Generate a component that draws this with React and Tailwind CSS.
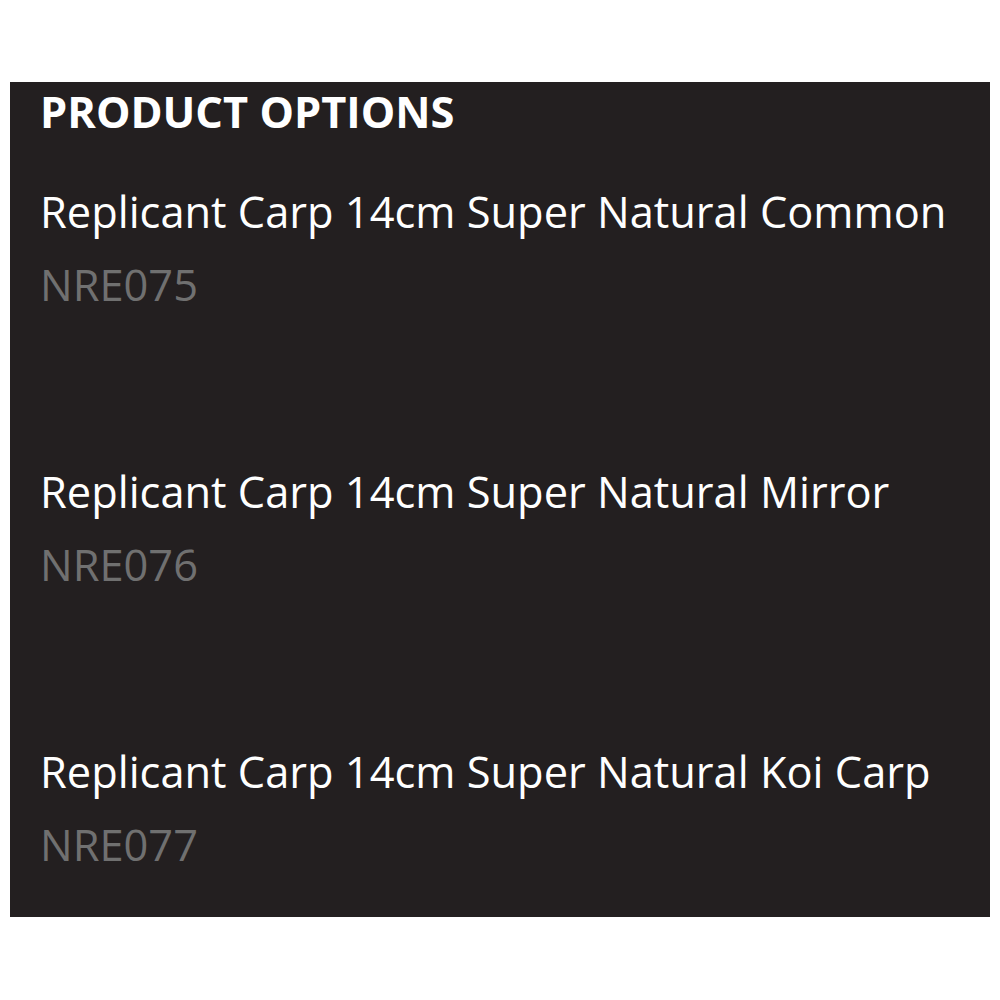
const options = [
  { name: 'Replicant Carp 14cm Super Natural Common', code: 'NRE075' },
  { name: 'Replicant Carp 14cm Super Natural Mirror', code: 'NRE076' },
  { name: 'Replicant Carp 14cm Super Natural Koi Carp', code: 'NRE077' },
]

export default function App() {
  return (
    <div className="w-[1000px] h-[1000px] bg-white pt-[82px] pl-[10px]" style={{ fontFamily: '"Open Sans", sans-serif' }}>
      <div className="w-[980px] h-[835px] bg-[#231f20] pl-[30px]">
        <h2 className="text-[43.4px] leading-[60px] font-bold text-white">PRODUCT OPTIONS</h2>
        <div className="mt-[40px] flex flex-col gap-[147px]">
          {options.map((opt) => (
            <div key={opt.code}>
              <div className="text-[43.4px] leading-[60px] text-white">{opt.name}</div>
              <div className="text-[43.4px] leading-[60px] text-[#707070] mt-[13px]">{opt.code}</div>
            </div>
          ))}
        </div>
      </div>
    </div>
  )
}
